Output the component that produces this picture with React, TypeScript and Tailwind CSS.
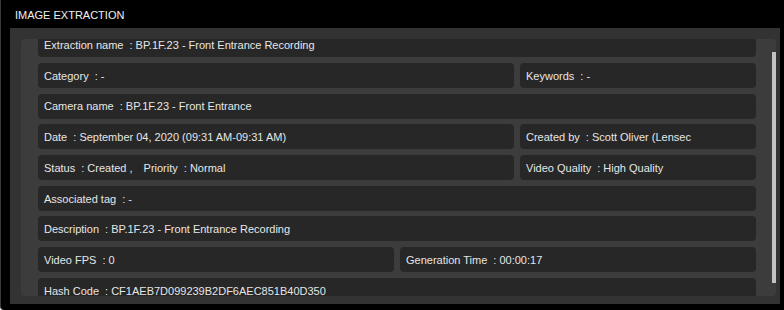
import React from 'react';

type Field = { label: string; value: string };

function Cell({ fields, className = '' }: { fields: Field[]; className?: string }) {
  return (
    <div className={`flex h-[25px] items-center rounded-[4px] bg-[#272727] pl-[6px] pt-[1px] whitespace-nowrap overflow-hidden ${className}`}>
      {fields.map((f, i) => (
        <span key={f.label} className={i > 0 ? 'ml-[11px]' : ''}>
          <span>{f.label}</span>
          <span className="ml-[6px]">: {f.value}</span>
        </span>
      ))}
    </div>
  );
}

export default function App() {
  return (
    <div
      className="w-[784px] h-[310px] bg-black text-[#e6e6e6] text-[11px] border-l border-[#3a3a3a] rounded-bl-[4px] overflow-hidden"
      style={{ fontFamily: '"Liberation Sans", Arial, sans-serif' }}
    >
      {/* title */}
      <div className="h-[28px] flex items-center pl-[14px] pt-[3px] text-[11px] text-[#f0f0f0]">
        IMAGE EXTRACTION
      </div>

      {/* panel */}
      <div className="ml-[9px] w-[770px] h-[276px] bg-[#333333] pt-[11px] pl-[11px] pr-[4px] pb-[8px]">
        <div className="flex h-full rounded-[4px] bg-[#3c3c3c] pl-[17px] overflow-hidden">
          <div className="w-[718px] overflow-hidden">
            <div className="mt-[-6.7px] flex flex-col gap-[5.7px]">
              <Cell fields={[{ label: 'Extraction name', value: 'BP.1F.23 - Front Entrance Recording' }]} />
              <div className="grid grid-cols-[476px_1fr] gap-[6px]">
                <Cell fields={[{ label: 'Category', value: '-' }]} />
                <Cell fields={[{ label: 'Keywords', value: '-' }]} />
              </div>
              <Cell fields={[{ label: 'Camera name', value: 'BP.1F.23 - Front Entrance' }]} />
              <div className="grid grid-cols-[476px_1fr] gap-[6px]">
                <Cell fields={[{ label: 'Date', value: 'September 04, 2020 (09:31 AM-09:31 AM)' }]} />
                <Cell fields={[{ label: 'Created by', value: 'Scott Oliver (Lensec' }]} />
              </div>
              <div className="grid grid-cols-[476px_1fr] gap-[6px]">
                <Cell
                  fields={[
                    { label: 'Status', value: 'Created ,' },
                    { label: 'Priority', value: 'Normal' },
                  ]}
                />
                <Cell fields={[{ label: 'Video Quality', value: 'High Quality' }]} />
              </div>
              <Cell fields={[{ label: 'Associated tag', value: '-' }]} />
              <Cell fields={[{ label: 'Description', value: 'BP.1F.23 - Front Entrance Recording' }]} />
              <div className="grid grid-cols-2 gap-[6px]">
                <Cell fields={[{ label: 'Video FPS', value: '0' }]} />
                <Cell fields={[{ label: 'Generation Time', value: '00:00:17' }]} />
              </div>
              <Cell fields={[{ label: 'Hash Code', value: 'CF1AEB7D099239B2DF6AEC851B40D350' }]} />
            </div>
          </div>
          {/* scrollbar */}
          <div className="ml-[16px] w-[4px] py-[13px]">
            <div className="h-full w-full bg-[#c2c2c2]" />
          </div>
        </div>
      </div>
    </div>
  );
}
